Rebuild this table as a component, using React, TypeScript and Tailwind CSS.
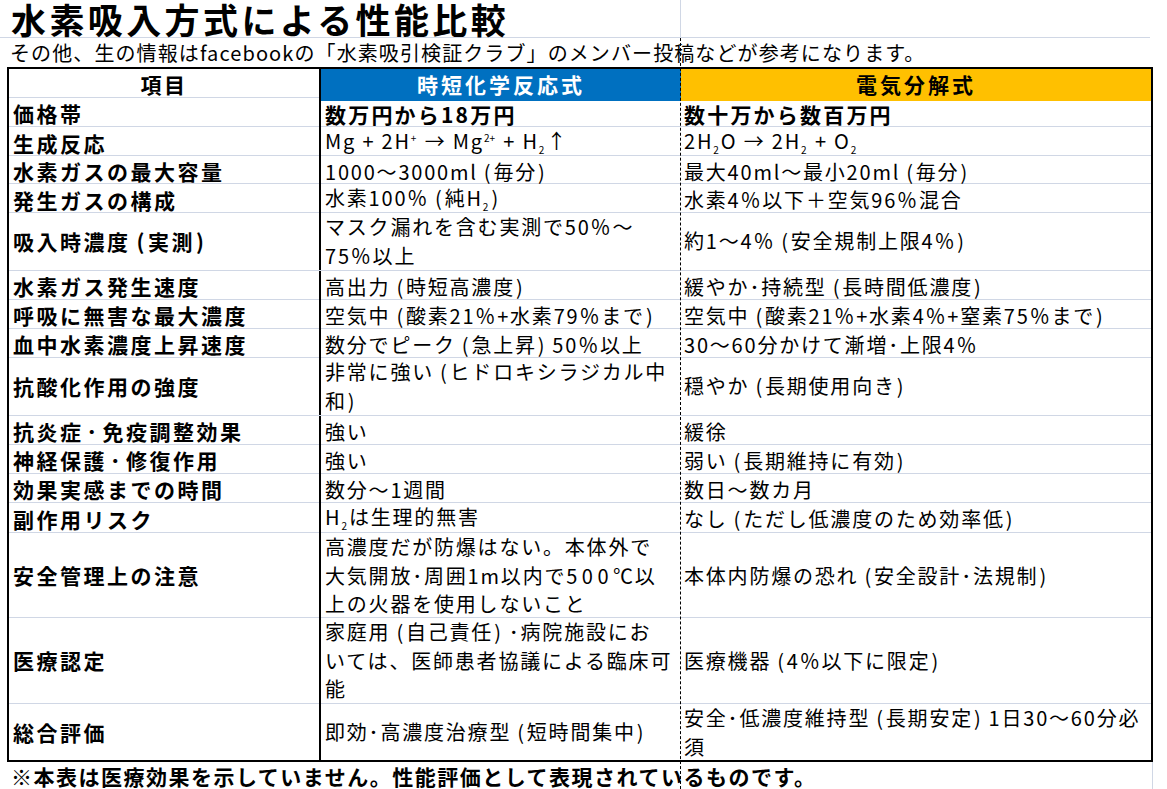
import React from "react";

type Row = {
    label: string;
    a: string;
    b: string;
    h: string;
    bold?: boolean;
};

// small markup: _2 subscript, ^2+ superscript, \n line break
function rich(s: string, head = false) {
    const parts = s.split(/(（|）|・|_\d+|\^[\d+]+|\n|500)/);
    return parts.map((p, i) => {
        if (p === "") return null;
        if (p === "\n") return <br key={i}/>;
        if (p === "（") return <span key={i} className="pl-[6px] pr-[1px]">(</span>;
        if (p === "）") return <span key={i} className="pl-[1px] pr-[6px]">)</span>;
        if (p === "・")
            return <span key={i} className={head ? "px-[3px]" : ""}>･</span>;
        if (p === "500") return <span key={i} className="tracking-[4.5px]">500</span>;
        if (p.startsWith("_"))
            return <span key={i} className="text-[10px] tracking-normal relative top-[5px] mr-[2px]">{p.slice(1)}</span>;
        if (p.startsWith("^"))
            return <span key={i} className="text-[10px] tracking-normal relative -top-[7px] mr-[2px]">{p.slice(1)}</span>;
        return <React.Fragment key={i}>{p}</React.Fragment>;
    });
}

const rows: Row[] = [
    {label: "価格帯", a: "数万円から18万円", b: "数十万から数百万円", h: "h-[29px]", bold: true},
    {label: "生成反応", a: "Mg + 2H^+ → Mg^2+ + H_2↑", b: "2H_2O → 2H_2 + O_2", h: "h-[29px]"},
    {label: "水素ガスの最大容量", a: "1000～3000ml（毎分）", b: "最大40ml～最小20ml（毎分）", h: "h-[28px]"},
    {label: "発生ガスの構成", a: "水素100％（純H_2）", b: "水素4％以下＋空気96％混合", h: "h-[29px]"},
    {label: "吸入時濃度（実測）", a: "マスク漏れを含む実測で50％～\n75％以上", b: "約1～4％（安全規制上限4％）", h: "h-[58px]"},
    {label: "水素ガス発生速度", a: "高出力（時短高濃度）", b: "緩やか・持続型（長時間低濃度）", h: "h-[29px]"},
    {label: "呼吸に無害な最大濃度", a: "空気中（酸素21％+水素79％まで）", b: "空気中（酸素21％+水素4％+窒素75％まで）", h: "h-[29px]"},
    {label: "血中水素濃度上昇速度", a: "数分でピーク（急上昇）50％以上", b: "30～60分かけて漸増・上限4％", h: "h-[29px]"},
    {label: "抗酸化作用の強度", a: "非常に強い（ヒドロキシラジカル中\n和）", b: "穏やか（長期使用向き）", h: "h-[58px]"},
    {label: "抗炎症・免疫調整効果", a: "強い", b: "緩徐", h: "h-[29px]"},
    {label: "神経保護・修復作用", a: "強い", b: "弱い（長期維持に有効）", h: "h-[29px]"},
    {label: "効果実感までの時間", a: "数分～1週間", b: "数日～数カ月", h: "h-[29px]"},
    {label: "副作用リスク", a: "H_2は生理的無害", b: "なし（ただし低濃度のため効率低）", h: "h-[30px]"},
    {
        label: "安全管理上の注意",
        a: "高濃度だが防爆はない。本体外で\n大気開放・周囲1m以内で500℃以\n上の火器を使用しないこと",
        b: "本体内防爆の恐れ（安全設計・法規制）",
        h: "h-[85px]"
    },
    {
        label: "医療認定",
        a: "家庭用（自己責任）・病院施設にお\nいては、医師患者協議による臨床可\n能",
        b: "医療機器（4％以下に限定）",
        h: "h-[86px]"
    },
    {label: "総合評価", a: "即効・高濃度治療型（短時間集中）", b: "安全・低濃度維持型（長期安定）1日30～60分必\n須", h: "h-[56px]"},
];

export default function App() {
    return (
        <div
            className="relative w-[1167px] h-[789px] overflow-hidden bg-white text-black font-['Noto_Sans_CJK_JP','Noto_Sans',sans-serif]">
            {/* title */}
            <div className="h-[38px] w-[1150px] border-b border-[#d0d7e5] pl-[11px] flex items-center">
                <h1 className="text-[35px] font-bold tracking-[3.4px] leading-[37px] whitespace-nowrap">
                    水素吸入方式による性能比較
                </h1>
            </div>
            <div className="h-[29px] pl-[10px] flex items-end">
                <p className="text-[20px] tracking-[1.1px] leading-[28px] whitespace-nowrap">
                    その他、生の情報はfacebookの「水素吸引検証クラブ」のメンバー投稿などが参考になります。
                </p>
            </div>

            {/* table */}
            <div className="ml-[7px] w-[1146px] border-2 border-black">
                <div className="grid grid-cols-[312px_360px_470px] h-[29px] border-b border-[#d0d7e5]">
                    <div
                        className="border-r-2 border-black flex items-center justify-center text-[21px] font-bold tracking-[2.5px]">
                        項目
                    </div>
                    <div
                        className="bg-[#0070c0] text-white flex items-center justify-center text-[21px] font-bold tracking-[3px]">
                        時短化学反応式
                    </div>
                    <div
                        className="bg-[#ffc000] flex items-center justify-center text-[21px] font-bold tracking-[3px]">
                        電気分解式
                    </div>
                </div>
                {rows.map((r, i) => (
                    <div
                        key={r.label}
                        className={`grid grid-cols-[312px_360px_470px] ${r.h} ${i < rows.length - 1 ? "border-b border-[#d0d7e5]" : ""}`}
                    >
                        <div
                            className="border-r-2 border-black pl-[4px] flex items-center text-[21px] font-bold tracking-[2.5px] whitespace-nowrap">
                            <div>{rich(r.label, true)}</div>
                        </div>
                        <div
                            className={`pl-[4px] flex items-center whitespace-nowrap leading-[28.5px] ${r.bold ? "text-[21px] font-bold tracking-[2.2px]" : "text-[20px] tracking-[1.8px]"}`}>
                            <div>{rich(r.a)}</div>
                        </div>
                        <div
                            className={`pl-[3px] flex items-center whitespace-nowrap leading-[28.5px] ${r.bold ? "text-[21px] font-bold tracking-[2.2px]" : "text-[20px] tracking-[1.8px]"}`}>
                            <div>{rich(r.b)}</div>
                        </div>
                    </div>
                ))}
            </div>

            {/* footnote */}
            <div className="h-[27px] w-[1153px] border-r border-[#d0d7e5] pl-[11px] flex items-center">
                <p className="text-[21px] font-bold tracking-[1.5px] whitespace-nowrap leading-[26px]">
                    ※本表は医療効果を示していません。性能評価として表現されているものです。
                </p>
            </div>

            {/* page break line */}
            <div className="absolute left-[680px] top-0 h-[38px] border-l border-[#d0d7e5]"/>
            <div className="absolute left-[680px] top-[38px] bottom-0 border-l border-dashed border-black"/>
        </div>
    );
}
